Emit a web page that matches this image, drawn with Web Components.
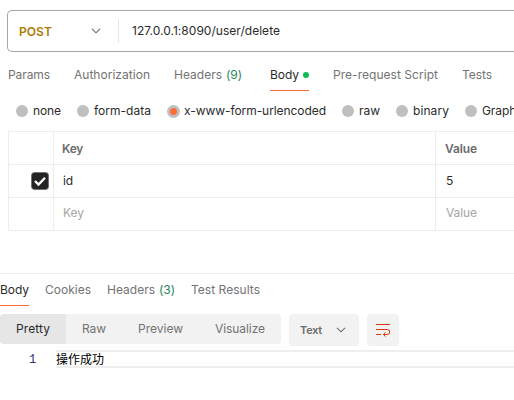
<!DOCTYPE html>
<html lang="en">
<head>
<meta charset="utf-8">
<title>Request builder</title>
<style>
html,body{margin:0;height:100%;overflow:hidden;background:#fff}
body{font:12px/16px Inter,"Liberation Sans","Noto Sans CJK SC",sans-serif;color:#333}
</style>
</head>
<body>
<request-page></request-page>
<script>
const define = (name, html, ready) => customElements.define(name, class extends HTMLElement {
  connectedCallback() {
    if (this.shadowRoot) return;
    const t = document.createElement('template');
    t.innerHTML = html;
    this.attachShadow({mode: 'open'}).append(t.content.cloneNode(true));
    if (ready) ready(this);
  }
});

// Label with a set width; letter spacing absorbs the difference.
define('ui-label', `<style>:host{display:block;white-space:nowrap;flex:none}span{display:inline-block}</style><span><slot></slot></span>`, el => {
  const w = parseFloat(el.getAttribute('w'));
  const s = el.shadowRoot.querySelector('span');
  const nat = s.getBoundingClientRect().width;
  s.style.letterSpacing = (w - nat) / el.textContent.length + 'px';
  el.style.width = w + 'px';
});

define('ui-chevron', `<style>:host{display:block;width:10px;height:6px}svg{display:block}</style>
<svg width="10" height="6" viewBox="0 0 10 6" fill="none" stroke="#6b6b6b" stroke-width="1.1"><path d="M1 .8l4 4 4-4"/></svg>`);

define('url-bar', `<style>
:host{display:flex;align-items:center;box-sizing:border-box;height:42px;margin:10px 0 0 7px;border:1px solid #a6a6a6;border-right:0;border-radius:5px 0 0 5px}
.method{color:#ad7a03;font-weight:600;padding:2px 0 0 11px}
ui-chevron{margin-left:39px}
i{width:1px;height:24px;background:#e6e6e6;margin:0 13px 0 17px}
.url{color:#2b2b2b;margin-top:-1px}
</style><ui-label class="method" w="33">POST</ui-label><ui-chevron></ui-chevron><i></i><ui-label class="url" w="148">127.0.0.1:8090/user/delete</ui-label>`);

define('ui-tab', `<style>
:host{display:flex;align-items:center;flex:none;box-sizing:border-box;height:32px;gap:4px;color:#737373;border-bottom:1px solid transparent}
:host([active]){color:#2b2b2b;border-color:#ff6c37}
</style><slot></slot>`);

define('ui-dot', `<style>:host{display:block;width:6px;height:6px;border-radius:50%;background:#0cbb52}</style>`);
define('ui-count', `<style>:host{display:block;color:#26855c}</style><slot></slot>`);

define('request-tabs', `<style>:host{display:flex;gap:24px;margin:7px 0 0 8px}</style>
<ui-tab><ui-label w="42">Params</ui-label></ui-tab>
<ui-tab><ui-label w="76">Authorization</ui-label></ui-tab>
<ui-tab><ui-label w="48">Headers</ui-label><ui-count><ui-label w="16">(9)</ui-label></ui-count></ui-tab>
<ui-tab active style="margin-left:4px"><ui-label w="29">Body</ui-label><ui-dot></ui-dot></ui-tab>
<ui-tab><ui-label w="105">Pre-request Script</ui-label></ui-tab>
<ui-tab><ui-label w="30">Tests</ui-label></ui-tab>`);

define('ui-radio', `<style>
:host{display:flex;align-items:center;gap:5px;flex:none;color:#2b2b2b}
b{box-sizing:border-box;width:12px;height:12px;border-radius:50%;background:#bfbfbf}
:host([checked]){gap:4px}
:host([checked]) b{width:13px;height:13px;border:3px solid #bfbfbf;background:#ff6c37}
</style><b></b><slot></slot>`);

define('body-types', `<style>:host{display:flex;gap:16px;height:40px;margin-left:16px;align-items:center}</style>
<ui-radio><ui-label w="28">none</ui-label></ui-radio>
<ui-radio><ui-label w="57">form-data</ui-label></ui-radio>
<ui-radio checked><ui-label w="142">x-www-form-urlencoded</ui-label></ui-radio>
<ui-radio><ui-label w="21">raw</ui-label></ui-radio>
<ui-radio><ui-label w="36">binary</ui-label></ui-radio>
<ui-radio><ui-label w="50">GraphQL</ui-label></ui-radio>`);

define('ui-check', `<style>:host{display:block;width:18px;height:18px}svg{display:block}</style>
<svg width="18" height="18" viewBox="0 0 18 18"><rect x=".5" y=".5" width="17" height="17" rx="3" fill="#242424" stroke="#6b6b6b" stroke-width=".8"/><path d="M4 9l3.5 3.5L14 5.7" fill="none" stroke="#fff" stroke-width="2.3"/></svg>`);

define('param-table', `<style>
:host{display:grid;grid-template-columns:46px 382px 1fr;grid-auto-rows:33px;margin-left:8px;border-top:1px solid #ededed;color:#2b2b2b}
div{box-sizing:border-box;border-bottom:1px solid #ededed;border-right:1px solid #ededed;display:flex;align-items:center;padding-left:9px}
div:nth-of-type(3n+1){border-left:1px solid #ededed;padding:0 4px 0 0;justify-content:flex-end}
div:nth-of-type(3n){border-right:0;padding-left:10px}
.h{font-weight:600;color:#6b6b6b;padding-top:2px}
.h.v{padding-left:9px!important}
.p{color:#a6a6a6;padding-bottom:2px}
</style>
<div></div><div class="h" style="padding-left:8px"><ui-label w="21">Key</ui-label></div><div class="h v"><ui-label w="32">Value</ui-label></div>
<div><ui-check></ui-check></div><div><ui-label w="10">id</ui-label></div><div><ui-label w="7">5</ui-label></div>
<div></div><div class="p"><ui-label w="21">Key</ui-label></div><div class="p"><ui-label w="31">Value</ui-label></div>`);

define('response-tabs', `<style>:host{display:flex;gap:16px;margin-top:42px;border-top:1px solid #ededed}</style>
<ui-tab active><ui-label w="29">Body</ui-label></ui-tab>
<ui-tab><ui-label w="46">Cookies</ui-label></ui-tab>
<ui-tab><ui-label w="48">Headers</ui-label><ui-count><ui-label w="16">(3)</ui-label></ui-count></ui-tab>
<ui-tab><ui-label w="69">Test Results</ui-label></ui-tab>`);

define('ui-segment', `<style>
:host{display:flex;align-items:center;box-sizing:border-box;height:30px;padding:0 16px;color:#737373}
:host([active]){background:#e6e6e6;color:#2b2b2b;border-radius:4px 0 0 4px}
</style><slot></slot>`);

define('ui-button', `<style>:host{display:flex;align-items:center;box-sizing:border-box;height:32px;border-radius:4px;background:#f2f2f2;color:#6b6b6b;font-size:11px;font-weight:600}</style><slot></slot>`);

define('view-bar', `<style>
:host{display:flex;gap:8px;margin-top:8px;align-items:flex-start}
.group{display:flex;background:#f2f2f2;border-radius:4px}
svg{display:block;margin:9px 0 0 8px;align-self:flex-start}
</style>
<div class="group"><ui-segment active><ui-label w="34">Pretty</ui-label></ui-segment>
<ui-segment><ui-label w="24">Raw</ui-label></ui-segment>
<ui-segment><ui-label w="45">Preview</ui-label></ui-segment>
<ui-segment><ui-label w="50">Visualize</ui-label></ui-segment></div>
<ui-button style="width:70px;padding-left:11px"><ui-label w="22">Text</ui-label><ui-chevron style="margin-left:14px"></ui-chevron></ui-button>
<ui-button style="width:32px"><svg width="16" height="15" viewBox="0 0 16 15" fill="none" stroke="#d23b0b"><path d="M1 1.5h14M1 6.5h11.2a2.4 2.4 0 0 1 0 5H8.4M1 11.5h5"/><path d="M10.6 9.3l-2.2 2.2 2.2 2.2"/></svg></ui-button>`);

define('code-line', `<style>
:host{display:flex;height:18px;margin-top:4px}
.n{width:56px;box-sizing:border-box;padding:2px 0 0 29px;font-family:"Liberation Mono",monospace;color:#2b2b80}
.c{flex:1;box-sizing:border-box;border-top:2px solid #eee;border-bottom:2px solid #eee;color:#000;font-family:"Noto Sans CJK SC",sans-serif;line-height:14px}
</style><div class="n"><ui-label w="7">1</ui-label></div><div class="c"><ui-label w="48">操作成功</ui-label></div>`);

define('request-page', `<style>:host{display:flow-root;width:514px;height:400px;overflow:hidden}</style>
<url-bar></url-bar><request-tabs></request-tabs><body-types></body-types><param-table></param-table>
<response-tabs></response-tabs><view-bar></view-bar><code-line></code-line>`);
</script>
</body>
</html>
